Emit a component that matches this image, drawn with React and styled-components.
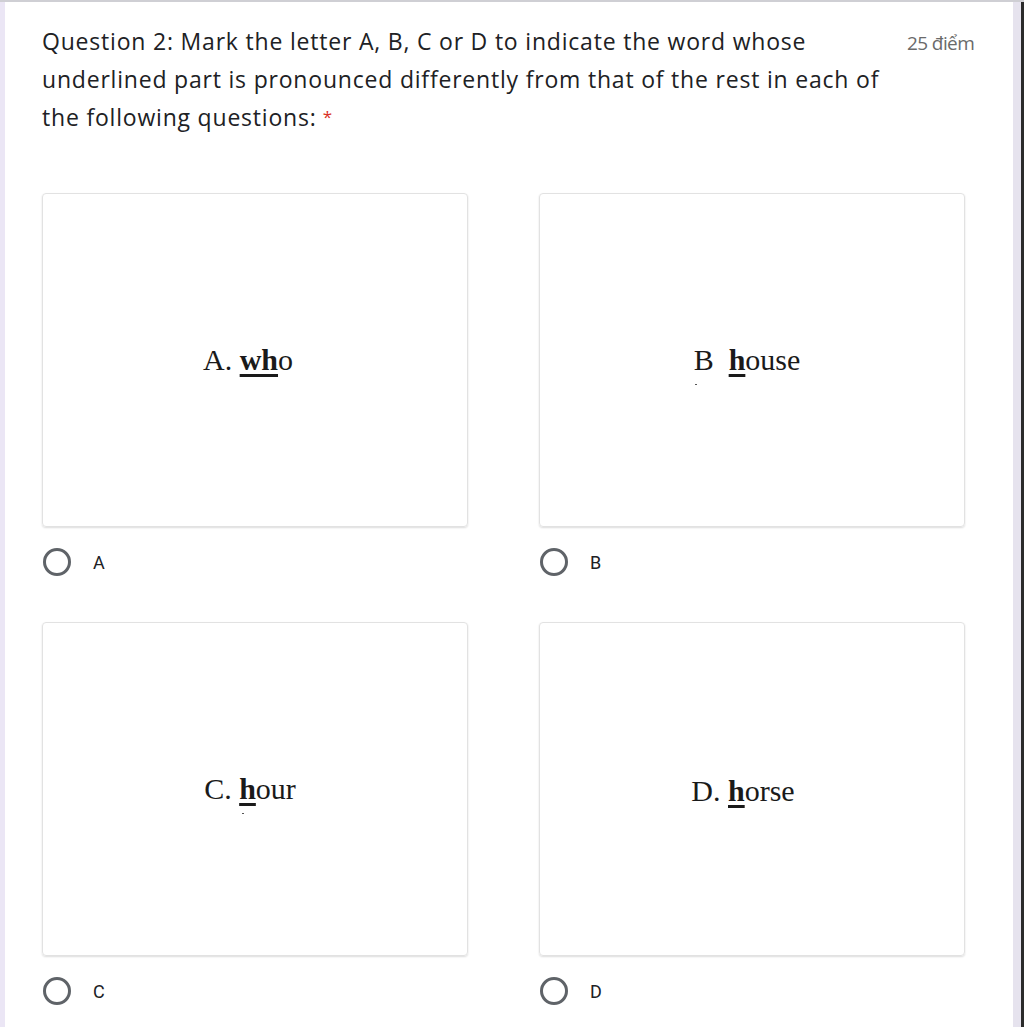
import React from 'react';
import styled, { createGlobalStyle } from 'styled-components';

const GlobalStyle = createGlobalStyle`
  html, body {
    margin: 0;
    padding: 0;
    background: #f0ebf8;
  }
  body {
    font-family: "Open Sans", Roboto, "Liberation Sans", Arial, sans-serif;
  }
`;

const Frame = styled.div`
  display: flex;
  width: 1024px;
  height: 1027px;
  overflow: hidden;
  border-top: 2px solid #cfcfd4;
  box-sizing: border-box;
  background: #ece8f4;
`;

const LeftStrip = styled.div`
  width: 5px;
  flex: none;
  background: #ebe6f5;
`;

const RightStrip = styled.div`
  width: 8px;
  flex: none;
  background: #e6e3ee;
  border-right: 3px solid #2b2b2b;
`;

const Sheet = styled.main`
  flex: none;
  width: 1008px;
  background: #fff;
  box-sizing: border-box;
  padding: 20px 0 0 37px;
`;

const Header = styled.div`
  display: flex;
  align-items: flex-start;
`;

const Title = styled.div`
  width: 858px;
  font-size: 23px;
  line-height: 38px;
  color: #202124;
  letter-spacing: 0.8px;
  white-space: nowrap;
`;

const Required = styled.span`
  color: #d93025;
  font-size: 17px;
  margin-left: 6px;
  vertical-align: top;
`;

const Points = styled.div`
  margin-left: 7px;
  margin-top: 8px;
  font-size: 19px;
  color: #6a6a6a;
  letter-spacing: -0.6px;
  white-space: nowrap;
`;

const Grid = styled.div`
  display: grid;
  grid-template-columns: 426px 426px;
  column-gap: 71px;
  row-gap: 46px;
  margin-top: 57px;
`;

const Option = styled.div`
  display: flex;
  flex-direction: column;
`;

const ImageCard = styled.div`
  height: 334px;
  border: 1px solid #e2e2e2;
  border-radius: 4px;
  box-shadow: 0 1px 2px rgba(0, 0, 0, 0.14);
  box-sizing: border-box;
  display: flex;
  align-items: center;
  justify-content: center;
  padding-right: ${p => p.$shift || 0}px;
`;

const Word = styled.div`
  font-family: "Liberation Serif", "Times New Roman", serif;
  font-size: 30px;
  color: #1a1a1a;
  margin-top: ${p => p.$down || 0}px;
  position: relative;
`;

const Mark = styled.span`
  font-weight: bold;
  text-decoration: underline;
  text-decoration-thickness: 3px;
  text-underline-offset: 4px;
`;

const Speck = styled.span`
  position: absolute;
  left: ${p => p.$left}px;
  bottom: -8px;
  width: 2px;
  height: 1px;
  background: #555;
`;

const RadioRow = styled.label`
  display: flex;
  align-items: center;
  margin-top: 21px;
  height: 28px;
  padding-left: 1px;
`;

const Circle = styled.span`
  width: 22px;
  height: 22px;
  border: 3px solid #5f6368;
  border-radius: 50%;
  flex: none;
`;

const Letter = styled.span`
  margin-left: 22px;
  font-family: Roboto, "Liberation Sans", Arial, sans-serif;
  font-size: 18px;
  color: #202124;
`;

const options = [
  { key: 'A', prefix: 'A. ', mark: 'wh', rest: 'o', shift: 14 },
  { key: 'B', prefix: 'B  ', mark: 'h', rest: 'ouse', shift: 10, speck: 1 },
  { key: 'C', prefix: 'C. ', mark: 'h', rest: 'our', shift: 10, speck: 38 },
  { key: 'D', prefix: 'D. ', mark: 'h', rest: 'orse', shift: 18, down: 4 },
];

const App = () => (
  <>
    <GlobalStyle />
    <Frame>
      <LeftStrip />
      <Sheet>
        <Header>
          <Title>
            Question 2: Mark the letter A, B, C or D to indicate the word whose
            <br />
            underlined part is pronounced differently from that of the rest in each of
            <br />
            the following questions:
            <Required>*</Required>
          </Title>
          <Points>25 điểm</Points>
        </Header>
        <Grid>
          {options.map(o => (
            <Option key={o.key}>
              <ImageCard $shift={o.shift}>
                <Word $down={o.down}>
                  <span style={{ whiteSpace: 'pre' }}>{o.prefix}</span>
                  <Mark>{o.mark}</Mark>
                  {o.rest}
                  {o.speck !== undefined && <Speck $left={o.speck} />}
                </Word>
              </ImageCard>
              <RadioRow>
                <Circle />
                <Letter>{o.key}</Letter>
              </RadioRow>
            </Option>
          ))}
        </Grid>
      </Sheet>
      <RightStrip />
    </Frame>
  </>
);

export default App;
